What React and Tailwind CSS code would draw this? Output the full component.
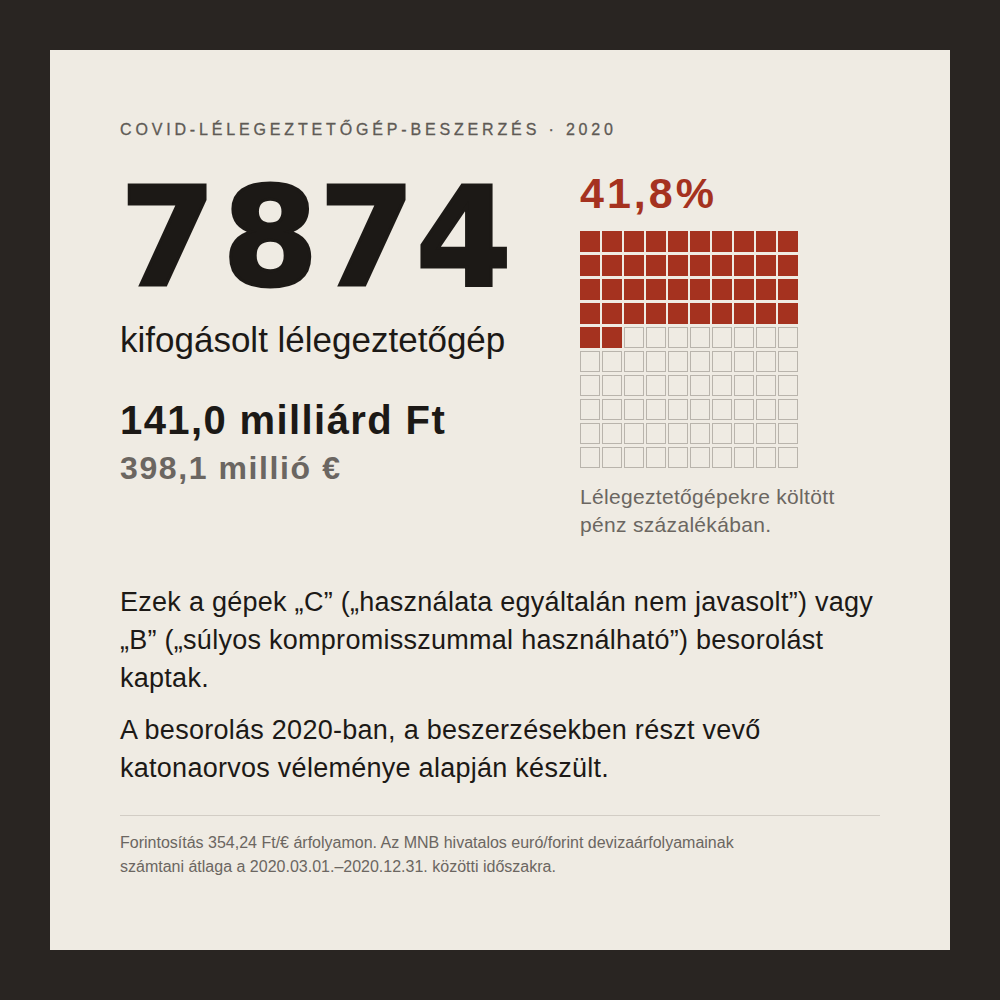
const FILLED = 42;

function Waffle() {
  return (
    <div className="grid w-[218px] grid-cols-[repeat(10,20px)] gap-x-[2px] gap-y-[3px]">
      {Array.from({ length: 100 }).map((_, i) =>
        i < FILLED ? (
          <div key={i} className="h-[21px] w-[20px] bg-[#a5321f]" />
        ) : (
          <div key={i} className="h-[21px] w-[20px] border border-[#b9b4ac]" />
        )
      )}
    </div>
  );
}

export default function App() {
  return (
    <div className="min-h-screen bg-[#292522] p-[50px] font-['Liberation_Sans','Arial',sans-serif]">
      <div className="h-[900px] w-[900px] bg-[#efebe3] px-[70px] pt-[70px] text-[#1c1916]">
        {/* Eyebrow */}
        <p className="text-[16px] leading-[20px] tracking-[0.24em] text-[#5e5a55] [-webkit-text-stroke:0.3px_#5e5a55]">
          COVID-LÉLEGEZTETŐGÉP-BESZERZÉS · 2020
        </p>

        <div className="mt-[24px] grid grid-cols-[460px_1fr]">
          {/* Left */}
          <div>
            <h1 className="mt-[14px] font-['DejaVu_Sans',sans-serif] text-[138px] font-bold leading-[120px] tracking-[0.005em] [-webkit-text-stroke:3px_#1c1916]">
              7<span className="text-[14px] leading-none"> </span>874
            </h1>
            <p className="mt-[22px] text-[35px] leading-[40px]">
              kifogásolt lélegeztetőgép
            </p>
            <p className="mt-[38px] text-[40px] font-bold leading-[44px] tracking-[0.035em]">
              141,0 milliárd Ft
            </p>
            <p className="mt-[7px] text-[32px] font-bold leading-[38px] tracking-[0.05em] text-[#6b6661]">
              398,1 millió €
            </p>
          </div>

          {/* Right */}
          <div className="mt-[5px]">
            <p className="text-[43px] font-bold leading-[48px] tracking-[0.07em] text-[#a5321f]">
              41,8%
            </p>
            <div className="mt-[14px]">
              <Waffle />
            </div>
            <p className="mt-[15px] text-[21px] leading-[28px] tracking-[0.015em] text-[#6b6661]">
              Lélegeztetőgépekre költött
              <br />
              pénz százalékában.
            </p>
          </div>
        </div>

        {/* Body */}
        <div className="mt-[44px] text-[27px] leading-[38px] tracking-[0.01em]">
          <p>
            Ezek a gépek „C” („használata egyáltalán nem javasolt”) vagy
            <br />
            „B” („súlyos kompromisszummal használható”) besorolást
            <br />
            kaptak.
          </p>
          <p className="mt-[14px]">
            A besorolás 2020-ban, a beszerzésekben részt vevő
            <br />
            katonaorvos véleménye alapján készült.
          </p>
        </div>

        <div className="mt-[28px] border-t border-[#d2cdc5]" />

        <p className="mt-[15px] text-[16px] leading-[24px] text-[#6b6661]">
          Forintosítás 354,24 Ft/€ árfolyamon. Az MNB hivatalos euró/forint
          devizaárfolyamainak
          <br />
          számtani átlaga a 2020.03.01.–2020.12.31. közötti időszakra.
        </p>
      </div>
    </div>
  );
}
